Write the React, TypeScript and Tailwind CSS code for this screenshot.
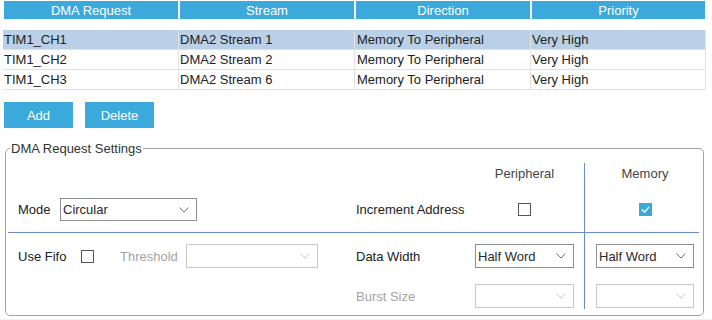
import React from 'react';

const font = { fontFamily: '"Liberation Sans", Arial, sans-serif' };

const rows = [
  { req: 'TIM1_CH1', stream: 'DMA2 Stream 1', dir: 'Memory To Peripheral', prio: 'Very High', sel: true },
  { req: 'TIM1_CH2', stream: 'DMA2 Stream 2', dir: 'Memory To Peripheral', prio: 'Very High' },
  { req: 'TIM1_CH3', stream: 'DMA2 Stream 6', dir: 'Memory To Peripheral', prio: 'Very High' },
];

function Chevron({ disabled }: { disabled?: boolean }) {
  return (
    <svg width="10" height="6" viewBox="0 0 10 6" className="shrink-0">
      <polyline points="0.5,0.5 5,5 9.5,0.5" fill="none" stroke={disabled ? '#c8c8c8' : '#777'} strokeWidth="1" />
    </svg>
  );
}

function Select({ value, w, h = 'h-[24px]', disabled }: { value?: string; w: string; h?: string; disabled?: boolean }) {
  return (
    <div className={`${w} ${h} flex items-center justify-between pl-[2px] pr-[7px] border ${disabled ? 'border-[#c8c8c8]' : 'border-[#8e8e8e]'} bg-white text-[#2a2a2a]`}>
      <span>{value}</span>
      <Chevron disabled={disabled} />
    </div>
  );
}

function Check({ checked }: { checked?: boolean }) {
  if (checked)
    return (
      <div className="w-[13px] h-[13px] bg-[#3aa8dc] flex items-center justify-center">
        <svg width="9" height="7" viewBox="0 0 9 7">
          <polyline points="1,3.5 3.5,6 8,1" fill="none" stroke="#fff" strokeWidth="1.3" />
        </svg>
      </div>
    );
  return <div className="w-[13px] h-[13px] border border-[#555]" />;
}

export default function App() {
  return (
    <div className="w-[712px] h-[320px] bg-white text-[13px] leading-[15px] text-[#222] overflow-hidden" style={font}>
      <div className="flex gap-[2px] ml-[4px] mt-[1px] h-[18px] text-white">
        {['DMA Request', 'Stream', 'Direction', 'Priority'].map((h, i) => (
          <div key={h} className={`${i === 3 ? 'w-[173px]' : 'w-[174px]'} bg-[#3ca9dc] flex items-center justify-center`}>{h}</div>
        ))}
      </div>

      <div className="ml-[3px] mt-[11px] w-[703px]">
        {rows.map(r => (
          <div key={r.req} className={`flex h-[20px] border-b border-[#e2e2e2] ${r.sel ? 'bg-[#bad0e6]' : ''}`}>
            <div className="w-[176px] pl-[1px] border-r border-[#e2e2e2] flex items-center">{r.req}</div>
            <div className="w-[176px] pl-[1px] border-r border-[#e2e2e2] flex items-center">{r.stream}</div>
            <div className="w-[176px] pl-[2px] border-r border-[#e2e2e2] flex items-center">{r.dir}</div>
            <div className="w-[175px] pl-[1px] border-r border-[#e2e2e2] flex items-center">{r.prio}</div>
          </div>
        ))}
      </div>

      <div className="flex gap-[12px] ml-[4px] mt-[12px]">
        <button className="w-[69px] h-[26px] bg-[#3ca9dc] text-white">Add</button>
        <button className="w-[69px] h-[26px] bg-[#3ca9dc] text-white">Delete</button>
      </div>

      <div className="relative ml-[5px] mt-[20px] w-[699px] h-[168px] border border-[#a2a2a2] rounded-[5px] pt-[14px]">
        <span className="absolute -top-[8px] left-[4px] px-[1px] bg-white text-[#333]">DMA Request Settings</span>

        <div className="ml-[2px] w-[691px]">
          <div className="flex h-[70px] border-b border-[#6a8ccc]">
            <div className="w-[348px] flex items-end pb-[10px] pl-[10px]">
              <div className="flex items-center h-[25px]">
                <span className="w-[42px]">Mode</span>
                <Select value="Circular" w="w-[137px]" h="h-[23px]" />
              </div>
            </div>
            <div className="w-[119px] flex items-end pb-[10px]">
              <div className="h-[25px] flex items-center">Increment Address</div>
            </div>
            <div className="w-[99px] flex flex-col items-center">
              <div className="h-[20px] flex items-center text-[#444]">Peripheral</div>
              <div className="mt-[14px] h-[25px] flex items-center"><Check /></div>
            </div>
            <div className="w-[10px]" />
            <div className="w-[115px] border-l border-[#6a8ccc]">
              <div className="ml-[11px] w-[98px] flex flex-col items-center">
                <div className="h-[20px] flex items-center text-[#444]">Memory</div>
                <div className="mt-[14px] h-[25px] flex items-center"><Check checked /></div>
              </div>
            </div>
          </div>

          <div className="flex h-[76px]">
            <div className="w-[348px] pl-[10px] pt-[11px]">
              <div className="flex items-center h-[24px]">
                <span className="w-[63px]">Use Fifo</span>
                <Check />
                <span className="ml-[26px] w-[66px] text-[#a3a3a3]">Threshold</span>
                <Select w="w-[132px]" disabled />
              </div>
            </div>
            <div className="w-[119px] pt-[11px] flex flex-col">
              <div className="h-[24px] flex items-center">Data Width</div>
              <div className="mt-[16px] h-[24px] flex items-center text-[#a3a3a3]">Burst Size</div>
            </div>
            <div className="w-[99px] pt-[11px] flex flex-col">
              <Select value="Half Word" w="w-[99px]" />
              <div className="mt-[16px]"><Select w="w-[99px]" disabled /></div>
            </div>
            <div className="w-[10px]" />
            <div className="w-[115px] border-l border-[#6a8ccc] pt-[11px]">
              <div className="ml-[11px] w-[98px] flex flex-col">
                <Select value="Half Word" w="w-[98px]" />
                <div className="mt-[16px]"><Select w="w-[98px]" disabled /></div>
              </div>
            </div>
          </div>
        </div>
      </div>
      <div className="mt-[3px] h-[1px] bg-[#f0f0f0]" />
    </div>
  );
}
